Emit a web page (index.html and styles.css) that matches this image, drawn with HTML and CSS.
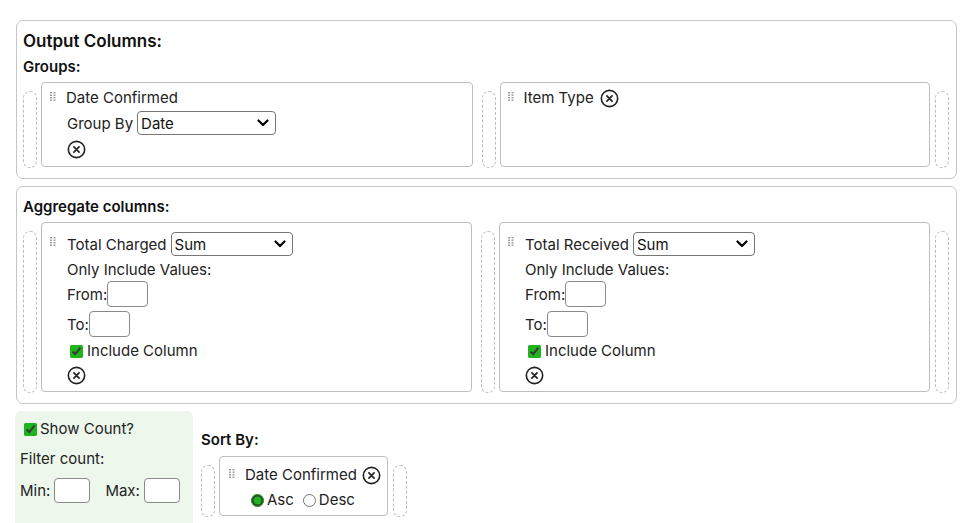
FILE: index.html
```html
<!DOCTYPE html>
<html lang="en">

<head>
    <meta charset="UTF-8">
    <meta name="viewport" content="width=device-width, initial-scale=1.0">
    <title>Report Builder</title>
    <link rel="stylesheet" href="styles.css">
</head>

<body>
    <div class="page">
        <div class="panel">
            <h2 class="panel-title">Output Columns:</h2>
            <h3 class="sub-title">Groups:</h3>
            <div class="drop-row">
                <div class="drop-zone"></div>
                <div class="col-card group-card">
                    <span class="handle"><svg width="6" height="9" viewBox="0 0 6 9"><g fill="#9a9a9a"><rect x="0" y="0" width="2" height="1.4"/><rect x="3.5" y="0" width="2" height="1.4"/><rect x="0" y="2.5" width="2" height="1.4"/><rect x="3.5" y="2.5" width="2" height="1.4"/><rect x="0" y="5" width="2" height="1.4"/><rect x="3.5" y="5" width="2" height="1.4"/><rect x="0" y="7.5" width="2" height="1.4"/><rect x="3.5" y="7.5" width="2" height="1.4"/></g></svg></span>
                    <div class="card-body">
                        <div class="card-name">Date Confirmed</div>
                        <div class="card-line">
                            <label>Group By</label>
                            <select class="sel-group">
                                <option>Date</option>
                                <option>Week</option>
                                <option>Month</option>
                            </select>
                        </div>
                        <button class="remove"><svg width="19" height="19" viewBox="0 0 20 20"><circle cx="10" cy="10" r="8.6" fill="none" stroke="#222" stroke-width="1.7"/><path d="M7.3 7.3 L12.7 12.7 M12.7 7.3 L7.3 12.7" stroke="#222" stroke-width="1.8" stroke-linecap="round"/></svg></button>
                    </div>
                </div>
                <div class="drop-zone"></div>
                <div class="col-card group-card">
                    <span class="handle"><svg width="6" height="9" viewBox="0 0 6 9"><g fill="#9a9a9a"><rect x="0" y="0" width="2" height="1.4"/><rect x="3.5" y="0" width="2" height="1.4"/><rect x="0" y="2.5" width="2" height="1.4"/><rect x="3.5" y="2.5" width="2" height="1.4"/><rect x="0" y="5" width="2" height="1.4"/><rect x="3.5" y="5" width="2" height="1.4"/><rect x="0" y="7.5" width="2" height="1.4"/><rect x="3.5" y="7.5" width="2" height="1.4"/></g></svg></span>
                    <div class="card-body">
                        <div class="card-name">Item Type <button class="remove inline"><svg width="19" height="19" viewBox="0 0 20 20"><circle cx="10" cy="10" r="8.6" fill="none" stroke="#222" stroke-width="1.7"/><path d="M7.3 7.3 L12.7 12.7 M12.7 7.3 L7.3 12.7" stroke="#222" stroke-width="1.8" stroke-linecap="round"/></svg></button></div>
                    </div>
                </div>
                <div class="drop-zone last"></div>
            </div>
        </div>

        <div class="panel">
            <h3 class="sub-title agg">Aggregate columns:</h3>
            <div class="drop-row">
                <div class="drop-zone"></div>
                <div class="col-card agg-card">
                    <span class="handle"><svg width="6" height="9" viewBox="0 0 6 9"><g fill="#9a9a9a"><rect x="0" y="0" width="2" height="1.4"/><rect x="3.5" y="0" width="2" height="1.4"/><rect x="0" y="2.5" width="2" height="1.4"/><rect x="3.5" y="2.5" width="2" height="1.4"/><rect x="0" y="5" width="2" height="1.4"/><rect x="3.5" y="5" width="2" height="1.4"/><rect x="0" y="7.5" width="2" height="1.4"/><rect x="3.5" y="7.5" width="2" height="1.4"/></g></svg></span>
                    <div class="card-body">
                        <div class="card-line first">
                            <label>Total Charged</label>
                            <select class="sel-agg">
                                <option>Sum</option>
                                <option>Average</option>
                                <option>Min</option>
                                <option>Max</option>
                            </select>
                        </div>
                        <div class="card-text">Only Include Values:</div>
                        <div class="card-line range"><label>From:</label><input type="text" class="num"></div>
                        <div class="card-line range"><label>To:</label><input type="text" class="num"></div>
                        <label class="check-line"><input type="checkbox" checked>Include Column</label>
                        <button class="remove"><svg width="19" height="19" viewBox="0 0 20 20"><circle cx="10" cy="10" r="8.6" fill="none" stroke="#222" stroke-width="1.7"/><path d="M7.3 7.3 L12.7 12.7 M12.7 7.3 L7.3 12.7" stroke="#222" stroke-width="1.8" stroke-linecap="round"/></svg></button>
                    </div>
                </div>
                <div class="drop-zone"></div>
                <div class="col-card agg-card">
                    <span class="handle"><svg width="6" height="9" viewBox="0 0 6 9"><g fill="#9a9a9a"><rect x="0" y="0" width="2" height="1.4"/><rect x="3.5" y="0" width="2" height="1.4"/><rect x="0" y="2.5" width="2" height="1.4"/><rect x="3.5" y="2.5" width="2" height="1.4"/><rect x="0" y="5" width="2" height="1.4"/><rect x="3.5" y="5" width="2" height="1.4"/><rect x="0" y="7.5" width="2" height="1.4"/><rect x="3.5" y="7.5" width="2" height="1.4"/></g></svg></span>
                    <div class="card-body">
                        <div class="card-line first">
                            <label>Total Received</label>
                            <select class="sel-agg">
                                <option>Sum</option>
                                <option>Average</option>
                                <option>Min</option>
                                <option>Max</option>
                            </select>
                        </div>
                        <div class="card-text">Only Include Values:</div>
                        <div class="card-line range"><label>From:</label><input type="text" class="num"></div>
                        <div class="card-line range"><label>To:</label><input type="text" class="num"></div>
                        <label class="check-line"><input type="checkbox" checked>Include Column</label>
                        <button class="remove"><svg width="19" height="19" viewBox="0 0 20 20"><circle cx="10" cy="10" r="8.6" fill="none" stroke="#222" stroke-width="1.7"/><path d="M7.3 7.3 L12.7 12.7 M12.7 7.3 L7.3 12.7" stroke="#222" stroke-width="1.8" stroke-linecap="round"/></svg></button>
                    </div>
                </div>
                <div class="drop-zone last"></div>
            </div>
        </div>

        <div class="bottom">
            <div class="count-box">
                <label class="check-line count"><input type="checkbox" checked>Show Count?</label>
                <div class="count-text">Filter count:</div>
                <div class="count-range">
                    <label>Min:</label><input type="text" class="small">
                    <label class="max">Max:</label><input type="text" class="small">
                </div>
            </div>
            <div class="sort-box">
                <h3 class="sub-title sort">Sort By:</h3>
                <div class="drop-row">
                    <div class="drop-zone"></div>
                    <div class="col-card sort-card">
                        <span class="handle"><svg width="6" height="9" viewBox="0 0 6 9"><g fill="#9a9a9a"><rect x="0" y="0" width="2" height="1.4"/><rect x="3.5" y="0" width="2" height="1.4"/><rect x="0" y="2.5" width="2" height="1.4"/><rect x="3.5" y="2.5" width="2" height="1.4"/><rect x="0" y="5" width="2" height="1.4"/><rect x="3.5" y="5" width="2" height="1.4"/><rect x="0" y="7.5" width="2" height="1.4"/><rect x="3.5" y="7.5" width="2" height="1.4"/></g></svg></span>
                        <div class="card-body">
                            <div class="card-name">Date Confirmed <button class="remove inline"><svg width="19" height="19" viewBox="0 0 20 20"><circle cx="10" cy="10" r="8.6" fill="none" stroke="#222" stroke-width="1.7"/><path d="M7.3 7.3 L12.7 12.7 M12.7 7.3 L7.3 12.7" stroke="#222" stroke-width="1.8" stroke-linecap="round"/></svg></button></div>
                            <div class="radio-line">
                                <label><input type="radio" name="dir" checked>Asc</label>
                                <label><input type="radio" name="dir">Desc</label>
                            </div>
                        </div>
                    </div>
                    <div class="drop-zone"></div>
                </div>
            </div>
        </div>
    </div>
</body>

</html>
```

FILE: styles.css
```css
* {
    box-sizing: border-box;
    margin: 0;
    padding: 0;
}

body {
    font-family: Inter, "Liberation Sans", sans-serif;
    font-size: 15px;
    color: #222;
    background-color: white;
    accent-color: #1cb51c;
}

.page {
    padding: 20px 12px 0 16px;
}

.panel {
    border: 1px solid #c6c6c6;
    border-radius: 7px;
    padding: 10px 7px 11px 6px;
    margin-bottom: 7px;
}

.panel-title {
    font-size: 17px;
    font-weight: 600;
    color: #111;
    line-height: 21px;
    margin-bottom: 5px;
}

.sub-title {
    font-size: 15px;
    font-weight: 600;
    color: #111;
    line-height: 20px;
    margin-bottom: 5px;
}

.drop-row {
    display: flex;
    align-items: stretch;
}

.drop-zone {
    width: 14px;
    flex-shrink: 0;
    border: 1px dashed #bbb;
    border-radius: 7px;
    margin-top: 9px;
    margin-bottom: -1px;
    margin-right: 4px;
}

.drop-zone.last {
    margin-right: 0;
}

.col-card {
    flex: 1;
    display: flex;
    border: 1px solid #bdbdbd;
    border-radius: 4px;
    padding: 4px 6px 5px 8px;
    margin-right: 9px;
}

.col-card:nth-child(4) {
    margin-right: 5px;
}

.group-card {
    padding-bottom: 7px;
}

.group-card:nth-child(4) {
    padding-left: 7px;
}

.handle {
    display: block;
    width: 16px;
    flex-shrink: 0;
    padding-top: 5px;
}

.handle svg {
    display: block;
}

.card-body {
    display: flex;
    flex-direction: column;
    align-items: flex-start;
}

.card-name {
    line-height: 20px;
    display: flex;
    align-items: center;
    padding-top: 1px;
    white-space: nowrap;
}

.card-line {
    display: flex;
    align-items: center;
    margin-top: 3px;
    padding-left: 1px;
}

.card-line label {
    margin-right: 4px;
}

select {
    appearance: none;
    -webkit-appearance: none;
    font-family: inherit;
    font-size: 15px;
    color: #111;
    height: 24px;
    border: 1px solid #767676;
    border-radius: 4px;
    background: white url("data:image/svg+xml;utf8,<svg xmlns='http://www.w3.org/2000/svg' width='12' height='8' viewBox='0 0 12 8'><path d='M1.5 1.5 L6 6 L10.5 1.5' fill='none' stroke='black' stroke-width='2.2' stroke-linecap='round' stroke-linejoin='round'/></svg>") no-repeat right 6px center;
    padding-left: 3px;
}

.sel-group {
    width: 139px;
}

.sel-agg {
    width: 122px;
}

.remove {
    background: none;
    border: none;
    cursor: pointer;
    display: block;
    margin-top: 5px;
    margin-left: 1px;
    height: 19px;
}

.remove.inline {
    margin: 0 0 0 6px;
}

.agg-card {
    padding-top: 9px;
    padding-bottom: 6px;
}

.card-line.first {
    margin-top: 0;
}

.card-text {
    padding-left: 1px;
    line-height: 20px;
    margin-top: 4px;
}

.card-line.range {
    margin-top: 1px;
}

.card-line.range label {
    margin-right: 0;
}

.num {
    width: 41px;
    height: 26px;
    border: 1px solid #8a8a8a;
    border-radius: 4px;
    font-family: inherit;
    font-size: 14px;
}

.card-line.range + .card-line.range {
    margin-top: 4px;
}

.check-line {
    display: flex;
    align-items: center;
    line-height: 20px;
    margin-top: 2px;
}

.agg-card .check-line {
    margin-top: 4px;
}

.check-line input {
    width: 13px;
    height: 13px;
    margin: 0 4px 0 4px;
}

.agg-card .remove {
    margin-top: 5px;
}

.bottom {
    display: flex;
    align-items: flex-start;
}

.count-box {
    width: 178px;
    height: 120px;
    margin-left: -1px;
    background-color: #edf7ec;
    border-radius: 6px 6px 0 0;
    padding: 6px 5px 5px;
}

.check-line.count input {
    margin-left: 4px;
    margin-right: 3px;
}

.count-text {
    line-height: 20px;
    margin-top: 10px;
}

.count-range {
    display: flex;
    align-items: center;
    margin-top: 9px;
}

.count-range label {
    margin-right: 4px;
}

.count-range .max {
    margin-left: 15px;
}

.small {
    width: 36px;
    height: 25px;
    border: 1px solid #8a8a8a;
    border-radius: 4px;
    font-family: inherit;
}

.sort-box {
    margin-left: 8px;
    padding-top: 19px;
}

.sub-title.sort {
    margin-bottom: 6px;
}

.sort-card {
    flex: none;
    width: 169px;
    padding: 7px 4px 5px 9px;
    margin-right: 5px;
}

.sort-card .card-name {
    padding-top: 1px;
}

.sort-card .remove.inline {
    margin-left: 5px;
}

.radio-line {
    display: flex;
    align-items: center;
    margin-top: 5px;
    padding-left: 5px;
    line-height: 20px;
}

.radio-line label {
    display: flex;
    align-items: center;
    margin-right: 8px;
}

.radio-line input {
    width: 13px;
    height: 13px;
    margin: 0 3px 0 1px;
}
```
